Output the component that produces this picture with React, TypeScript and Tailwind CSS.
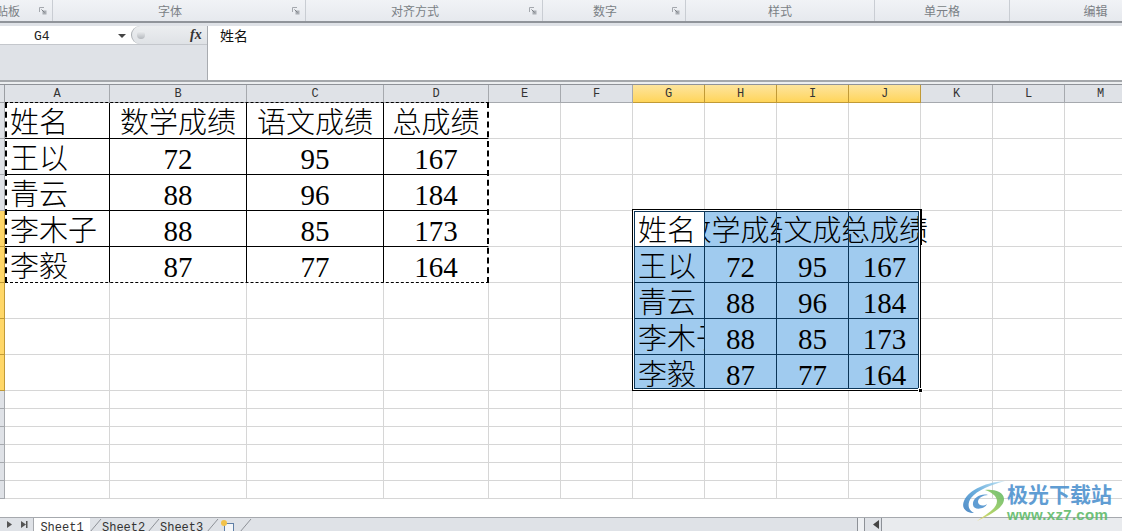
const COLS = ["A", "B", "C", "D", "E", "F", "G", "H", "I", "J", "K", "L", "M"];
const RIBBON_GROUPS = [
  { label: "粘贴板", width: "w-[53px]", launcher: true, align: "justify-start -indent-[16px]" },
  { label: "字体", width: "w-[253px]", launcher: true, align: "justify-center pr-[18px]" },
  { label: "对齐方式", width: "w-[237px]", launcher: true, align: "justify-center pr-[18px]" },
  { label: "数字", width: "w-[143px]", launcher: true, align: "justify-center pr-[18px]" },
  { label: "样式", width: "w-[189px]", launcher: false, align: "justify-center" },
  { label: "单元格", width: "w-[135px]", launcher: false, align: "justify-center" },
  { label: "编辑", width: "w-[172px]", launcher: false, align: "justify-center" },
];
const ROW_HEIGHTS = [36, 36, 36, 36, 36, 36, 36, 36, 18, 18, 18, 18, 18, 18];
const TABLE = [
  ["姓名", "数学成绩", "语文成绩", "总成绩"],
  ["王以", "72", "95", "167"],
  ["青云", "88", "96", "184"],
  ["李木子", "88", "85", "173"],
  ["李毅", "87", "77", "164"],
];
const SHEET_GRID = {
  gridTemplateColumns: "5px 105px 137px 137px 105px 72px 72px 72px 72px 72px 72px 72px 72px 72px",
  gridTemplateRows: `18px ${ROW_HEIGHTS.map((h) => `${h}px`).join(" ")}`,
};
const cellFont = "pt-[6px] font-['Liberation_Serif','Noto_Sans_CJK_SC',serif] text-[29px] font-light leading-none text-black";

function Launcher() {
  return (
    <svg className="absolute right-[5px] top-[7px]" width="8" height="8" viewBox="0 0 8 8">
      <path d="M0.5 5V0.5H5" fill="none" stroke="#a4a8ae" />
      <rect x="3.5" y="3.5" width="4" height="4" fill="#a9adb3" />
      <path d="M2.5 2.5l3 3" stroke="#7c8086" />
    </svg>
  );
}

function Ribbon() {
  return (
    <div className="flex h-[26px] shrink-0 flex-col">
      <div className="flex h-[21px] overflow-hidden bg-gradient-to-b from-[#f1f3f6] to-[#e6e9ee]">
        {RIBBON_GROUPS.map((group) => (
          <div
            className={`relative flex shrink-0 items-center border-r border-[#c9cdd3] font-['Noto_Sans_CJK_SC',sans-serif] text-[12px] text-[#7a7f85] ${group.width} ${group.align}`}
            key={group.label}
          >
            {group.label}
            {group.launcher && <Launcher />}
          </div>
        ))}
      </div>
      <div className="h-[5px] border-t-2 border-[#90949a] bg-[#dfe2e7]" />
    </div>
  );
}

function FormulaBar() {
  return (
    <div className="flex h-[59px] shrink-0 flex-col">
      <div className="flex h-[54px]">
        <div className="flex w-[208px] shrink-0 flex-col border-r border-[#a8abb0] bg-[#dfe2e7]">
          <div className="flex h-[19px] items-center border-b border-[#c4c7cc] bg-white">
            <div className="flex h-full w-[131px] items-center">
              <span className="ml-[34px] pt-[2px] font-['Liberation_Mono',monospace] text-[13px] leading-none text-[#222]">G4</span>
              <svg className="ml-[68px] mt-[2px]" width="8" height="4" viewBox="0 0 8 4">
                <path d="M0 0h8L4 4z" fill="#444" />
              </svg>
            </div>
            <div className="flex h-full flex-1 items-center rounded-l-[10px] border-l border-[#a9adb2] bg-gradient-to-b from-[#eceef0] to-[#dfe2e6] pl-[5px]">
              <span className="h-[8px] w-[8px] rounded-full bg-gradient-to-b from-[#eef0f2] to-[#b4b8bd]" />
              <span className="ml-[45px] font-['Liberation_Serif',serif] text-[14px] font-bold italic leading-none text-[#333]">
                fx
              </span>
            </div>
          </div>
        </div>
        <div className="flex-1 bg-white pl-[12px] font-['Noto_Sans_CJK_SC',sans-serif] text-[14px] leading-[18px] text-[#111]">
          姓名
        </div>
      </div>
      <div className="h-[5px] border-b border-t-2 border-b-[#8f9298] border-t-[#a4a7ab] bg-[#eceef0]" />
    </div>
  );
}

function Cell(props: { text: string; row: number; col: number }) {
  const { text, row, col } = props;
  const align = col === 0 ? "justify-start pl-[5px]" : "justify-center";
  const right = col === 3 ? "border-r-white" : "border-r-black";
  const bottom = row === 4 ? "border-b-white" : "border-b-black";
  return (
    <div className={`flex items-center overflow-hidden whitespace-nowrap border-b border-r ${align} ${right} ${bottom} ${cellFont}`}>
      <span className="shrink-0">{text}</span>
    </div>
  );
}

function SelectedCell(props: { text: string; row: number; col: number }) {
  const { text, row, col } = props;
  const active = row === 0 && col === 0;
  const align = col === 0 ? "justify-start pl-[5px]" : "justify-center";
  const bg = active ? "bg-white" : "bg-[#a0cbef]";
  // J4 spills to the right, over the empty K4
  const clip = row === 0 && col === 3 ? "[clip-path:inset(-2px_-20px_-2px_0)]" : "overflow-hidden";
  return (
    <div className={`flex items-center whitespace-nowrap border-b border-r border-[#0b3557] ${align} ${bg} ${clip} ${cellFont}`}>
      <span className="relative z-10 shrink-0">{text}</span>
    </div>
  );
}

function Sheet() {
  return (
    <div className="relative h-[432px] shrink-0 overflow-hidden bg-white">
      <div className="grid" style={SHEET_GRID}>
        <div className="border-b border-r border-[#9b9ea3] bg-[#dfe2e7]" />
        {COLS.map((col, index) => {
          const selected = index >= 6 && index <= 9;
          return (
            <div
              className={
                selected
                  ? "flex items-center justify-center border-b border-r border-[#c19a36] bg-gradient-to-b from-[#fde49c] to-[#ffd558] pt-[1px] font-['Liberation_Mono',monospace] text-[12px] text-[#333]"
                  : "flex items-center justify-center border-b border-r border-[#a6a9ae] bg-[#dfe2e7] pt-[1px] font-['Liberation_Mono',monospace] text-[12px] text-[#333]"
              }
              key={col}
            >
              {col}
            </div>
          );
        })}
        {ROW_HEIGHTS.map((_, row) => {
          const selectedRow = row >= 3 && row <= 7;
          return (
            <div className="contents" key={row}>
              <div
                className={
                  selectedRow
                    ? "border-b border-r border-[#c19a36] bg-[#ffd768]"
                    : "border-b border-r border-[#a6a9ae] bg-[#dfe2e7]"
                }
              />
              {COLS.map((col, index) => {
                if (row <= 4 && index <= 3) {
                  return <Cell col={index} key={col} row={row} text={TABLE[row][index]} />;
                }
                if (row >= 3 && row <= 7 && index >= 6 && index <= 9) {
                  return <SelectedCell col={index - 6} key={col} row={row - 3} text={TABLE[row - 3][index - 6]} />;
                }
                return <div className="border-b border-r border-[#d6d6d6]" key={col} />;
              })}
            </div>
          );
        })}
      </div>
      {/* marquee and selection frame sit in a second grid laid over the cells */}
      <div className="pointer-events-none absolute inset-0 grid" style={SHEET_GRID}>
        <div className="-mt-[1px] border-x-2 border-y border-dashed border-black [grid-column:2/6] [grid-row:2/7]" />
        <div className="relative -ml-[1px] -mt-[2px] border border-black shadow-[inset_0_0_0_1px_white,inset_0_0_0_2px_#0b3557] [grid-column:8/12] [grid-row:5/10]">
          <div className="absolute right-[-2px] top-[-1px] h-[36px] w-[2px] bg-black" />
          <div className="absolute bottom-[-3px] right-[-3px] h-[5px] w-[5px] border border-white bg-black" />
        </div>
      </div>
    </div>
  );
}

function TabSlant() {
  return (
    <svg className="shrink-0" width="12" height="14" viewBox="0 0 12 14">
      <path d="M0 14L11 1" stroke="#8d9197" fill="none" />
    </svg>
  );
}

function BottomBar() {
  const tabText = "font-['Liberation_Mono',monospace] text-[12px] leading-none text-[#333]";
  return (
    <div className="flex h-[14px] shrink-0 items-stretch overflow-hidden border-t border-[#a6a9ae] bg-[#dfe2e7]">
      <div className="flex w-[34px] shrink-0 items-center border-r border-[#a6a9ae] pl-[6px]">
        <svg width="24" height="9" viewBox="0 0 24 9">
          <path d="M1 1l5 3.5L1 8z" fill="#555" />
          <path d="M15 1l5 3.5-5 3.5z M20 1h1.5v7H20z" fill="#555" />
        </svg>
      </div>
      <div className={`flex w-[56px] shrink-0 items-start justify-center bg-white pt-[4px] ${tabText}`}>Sheet1</div>
      <TabSlant />
      <div className={`w-[46px] shrink-0 pt-[4px] ${tabText}`}>Sheet2</div>
      <TabSlant />
      <div className={`w-[47px] shrink-0 pt-[4px] ${tabText}`}>Sheet3</div>
      <TabSlant />
      <svg className="ml-[1px] mt-[1px] shrink-0" width="15" height="13" viewBox="0 0 15 13">
        <rect x="4.5" y="4.5" width="9" height="9" fill="#f4f6f9" stroke="#5f7fa6" />
        <circle cx="4" cy="4" r="3" fill="#f2c24a" />
      </svg>
      <div className="ml-[5px] w-[10px] shrink-0">
        <TabSlant />
      </div>
      <div className="flex-1" />
      <div className="mr-[5px] h-full w-[8px] shrink-0 border-x border-[#8d9197] bg-[#eef0f3]" />
      <div className="flex w-[12px] shrink-0 items-center border-r border-[#8d9197] pl-[3px]">
        <svg width="6" height="9" viewBox="0 0 6 9">
          <path d="M6 0v9L0 4.5z" fill="#444" />
        </svg>
      </div>
      <div className="w-[240px] shrink-0 bg-[#e9ebee]" />
    </div>
  );
}

function Watermark() {
  return (
    <div className="absolute bottom-[8px] right-[10px] flex items-start opacity-90">
      <svg width="44" height="40" viewBox="0 0 44 40">
        <defs>
          <linearGradient id="sweep" x1="1" y1="0" x2="0" y2="1">
            <stop offset="0" stopColor="#bfe3f4" />
            <stop offset="0.5" stopColor="#5ba6da" />
            <stop offset="1" stopColor="#3f7fc0" />
          </linearGradient>
          <linearGradient id="tail" x1="1" y1="0" x2="0" y2="1">
            <stop offset="0" stopColor="#5fb868" />
            <stop offset="0.6" stopColor="#a6cf5c" />
            <stop offset="1" stopColor="#f0dc6a" />
          </linearGradient>
        </defs>
        <path d="M43 0C26 1 7 8 2 20c-3 7 2 12 10 12C6 29 5 23 9 17 15 9 29 4 43 0z" fill="url(#sweep)" />
        <path d="M11 24c-1-7 8-12 15-10-5 0-10 3-10 7 0 3 5 5 9 2-2 5-13 7-14 1z" fill="#4f93cf" />
        <path d="M23 9c9-1 19 2 19 9 0 9-14 16-27 22 8-6 20-12 20-20 0-5-6-9-12-11z" fill="url(#tail)" />
      </svg>
      <div className="ml-[1px] flex flex-col">
        <span className="font-['Noto_Sans_CJK_SC',sans-serif] text-[21px] font-bold leading-[25px] text-[#4f93cf]">
          极光下载站
        </span>
        <span className="font-['Liberation_Sans',sans-serif] text-[15px] font-bold leading-[17px] tracking-[0.3px] text-[#62bb6b]">
          www.xz7.com
        </span>
      </div>
    </div>
  );
}

export default function App() {
  return (
    <div className="relative flex h-[531px] w-[1122px] flex-col overflow-hidden bg-white">
      <Ribbon />
      <FormulaBar />
      <Sheet />
      <BottomBar />
      <Watermark />
    </div>
  );
}
